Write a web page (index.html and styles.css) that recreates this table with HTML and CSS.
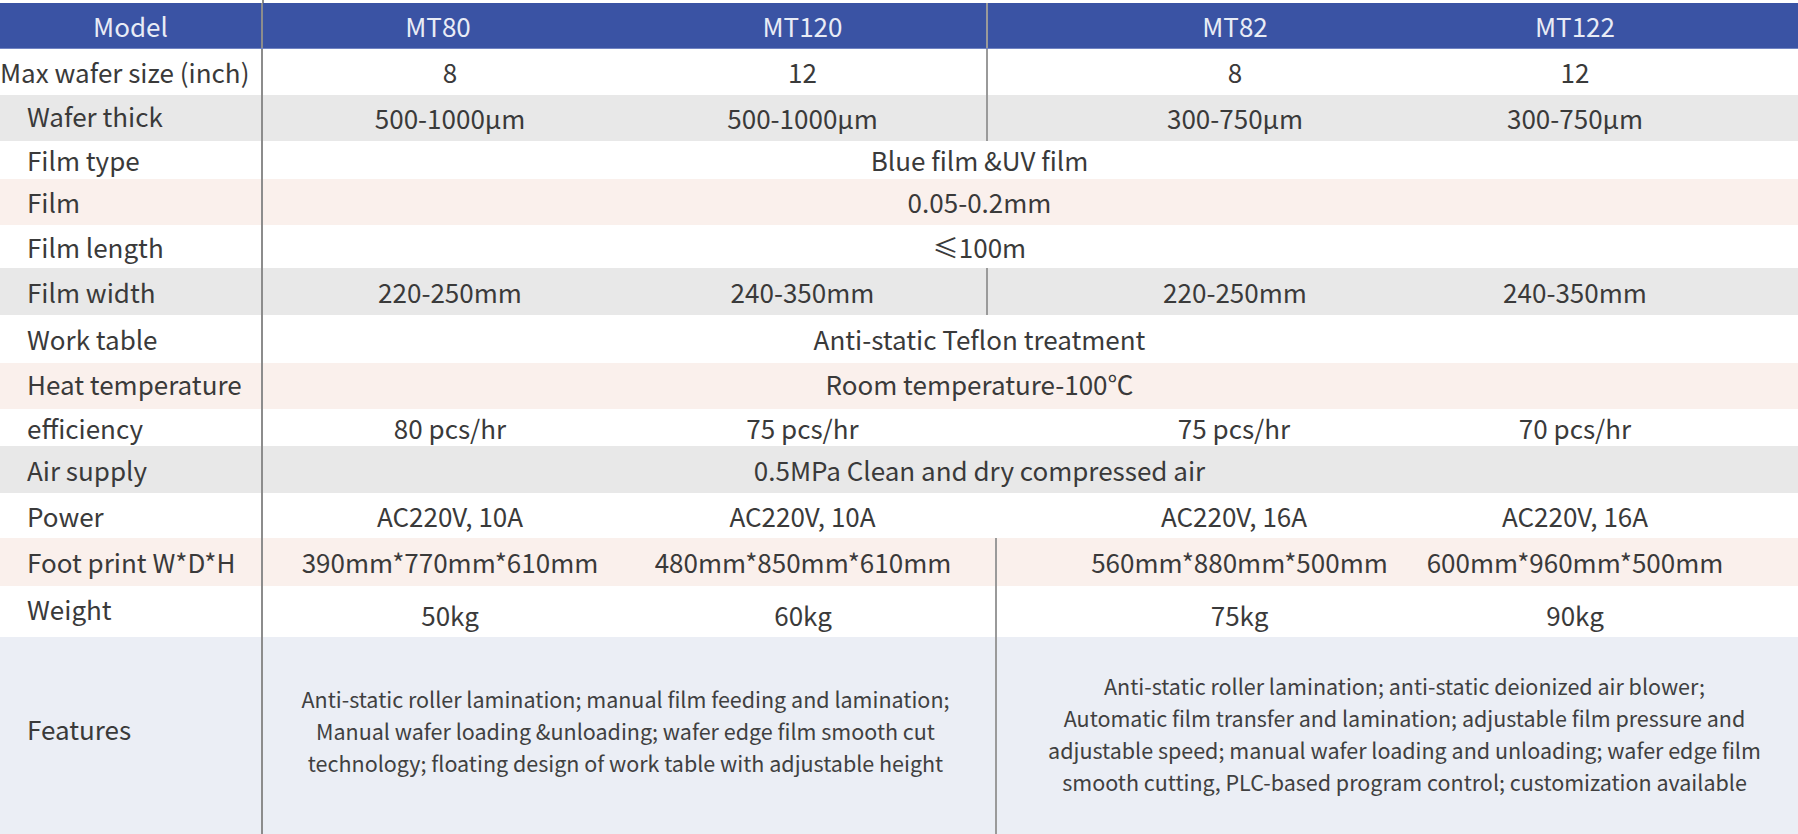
FILE: index.html
```html
<!DOCTYPE html>
<html lang="en">
<head>
<meta charset="utf-8">
<title>Wafer Mounter Specifications</title>
<link rel="stylesheet" href="styles.css">
</head>
<body>
<div class="spec">
  <div class="row head">
    <div class="lab center">Model</div>
    <div class="c1 hc1">MT80</div>
    <div class="c2">MT120</div>
    <div class="c3 line">MT82</div>
    <div class="c4">MT122</div>
  </div>
  <div class="row white h46">
    <div class="lab flush">Max wafer size (inch)</div>
    <div class="c1">8</div>
    <div class="c2">12</div>
    <div class="c3 line">8</div>
    <div class="c4">12</div>
  </div>
  <div class="row grey h46">
    <div class="lab up2">Wafer thick</div>
    <div class="c1">500-1000µm</div>
    <div class="c2">500-1000µm</div>
    <div class="c3 line">300-750µm</div>
    <div class="c4">300-750µm</div>
  </div>
  <div class="row white h38">
    <div class="lab">Film type</div>
    <div class="span">Blue film &amp;UV film</div>
  </div>
  <div class="row pink h46">
    <div class="lab">Film</div>
    <div class="span">0.05-0.2mm</div>
  </div>
  <div class="row white h43">
    <div class="lab">Film length</div>
    <div class="span">≤100m</div>
  </div>
  <div class="row grey h47">
    <div class="lab">Film width</div>
    <div class="c1">220-250mm</div>
    <div class="c2">240-350mm</div>
    <div class="c3 line">220-250mm</div>
    <div class="c4">240-350mm</div>
  </div>
  <div class="row white h48">
    <div class="lab">Work table</div>
    <div class="span">Anti-static Teflon treatment</div>
  </div>
  <div class="row pink h46">
    <div class="lab up2">Heat temperature</div>
    <div class="span up2">Room temperature-100℃</div>
  </div>
  <div class="row white h37">
    <div class="lab">efficiency</div>
    <div class="c1">80 pcs/hr</div>
    <div class="c2">75 pcs/hr</div>
    <div class="c3">75 pcs/hr</div>
    <div class="c4">70 pcs/hr</div>
  </div>
  <div class="row grey h47">
    <div class="lab">Air supply</div>
    <div class="span">0.5MPa Clean and dry compressed air</div>
  </div>
  <div class="row white h45">
    <div class="lab">Power</div>
    <div class="c1">AC220V, 10A</div>
    <div class="c2">AC220V, 10A</div>
    <div class="c3">AC220V, 16A</div>
    <div class="c4">AC220V, 16A</div>
  </div>
  <div class="row pink h48 alt">
    <div class="lab">Foot print W*D*H</div>
    <div class="c1">390mm*770mm*610mm</div>
    <div class="c2">480mm*850mm*610mm</div>
    <div class="c3 line">560mm*880mm*500mm</div>
    <div class="c4">600mm*960mm*500mm</div>
  </div>
  <div class="row white h51 alt">
    <div class="lab up6">Weight</div>
    <div class="c1 low">50kg</div>
    <div class="c2 low">60kg</div>
    <div class="c3 line low">75kg</div>
    <div class="c4 low">90kg</div>
  </div>
  <div class="row feat alt">
    <div class="lab up14">Features</div>
    <div class="fl">Anti-static roller lamination; manual film feeding and lamination;<br>Manual wafer loading &amp;unloading; wafer edge film smooth cut<br>technology; floating design of work table with adjustable height</div>
    <div class="fr line">Anti-static roller lamination; anti-static deionized air blower;<br>Automatic film transfer and lamination; adjustable film pressure and<br>adjustable speed; manual wafer loading and unloading; wafer edge film<br>smooth cutting, PLC-based program control; customization available</div>
  </div>
</div>
</body>
</html>
```

FILE: styles.css
```css
html, body {
  margin: 0;
  padding: 0;
  background: #ffffff;
}

body {
  font-family: "Noto Sans CJK SC", "Open Sans", sans-serif;
  color: #3a3a3a;
  font-size: 26px;
}

.spec {
  width: 1798px;
  padding-top: 3px;
  background: linear-gradient(#8c8c8c, #8c8c8c) 262px 0 / 2px 3px no-repeat;
}

.row {
  display: grid;
  grid-template-columns: 263px 374px 349px 496px 316px;
}

.row.alt {
  grid-template-columns: 263px 374px 358px 487px 316px;
}

.row > div {
  display: flex;
  align-items: center;
  justify-content: center;
  white-space: nowrap;
  line-height: 1;
}

.row > .lab {
  justify-content: flex-start;
  padding-left: 27px;
  border-right: 2px solid #8c8c8c;
}

.row > .lab.center {
  justify-content: center;
  padding-left: 0;
}

.row > .lab.flush {
  padding-left: 0;
}

.row > .c2 { padding-right: 18px; }
.row.alt > .c2 { padding-right: 26px; }
.row > .c4 { padding-right: 130px; }
.row > .c1.hc1 { padding-right: 24px; }

.row > .span {
  grid-column: 2 / 6;
  padding-right: 102px;
}

.row > .line {
  border-left: 2px solid #9a9a9a;
}

.row > .low { padding-top: 6px; }
.row > .up2 { padding-bottom: 4px; }
.row > .up6 { padding-bottom: 6px; }
.row > .up14 { padding-bottom: 14px; }

.head {
  background: #3a53a4;
  color: #e9ecf6;
  height: 45px;
  border-bottom: 1px solid #7184c2;
}

.white { background: #ffffff; }
.grey { background: #e8e8e8; }
.pink { background: #faf0ec; }

.h37 { height: 37px; }
.h38 { height: 38px; }
.h43 { height: 43px; }
.h45 { height: 45px; }
.h46 { height: 46px; }
.h47 { height: 47px; }
.h48 { height: 48px; }
.h51 { height: 51px; }

.feat {
  background: #ebeef5;
  height: 197px;
}

.row > .fl,
.row > .fr {
  text-align: center;
  font-size: 21.5px;
  line-height: 32px;
  color: #404040;
}

.row > .fl { grid-column: 2 / 4; padding-bottom: 10px; padding-right: 7px; }
.row > .fr { grid-column: 4 / 6; padding-bottom: 4px; padding-left: 14px; }
```
